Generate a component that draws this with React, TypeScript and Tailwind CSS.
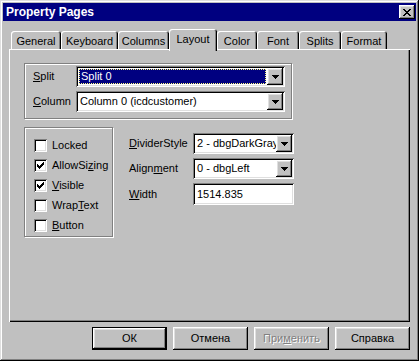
import React from 'react';

const RAISED =
  'shadow-[inset_-1px_-1px_0_#000,inset_1px_1px_0_#fff,inset_-2px_-2px_0_#808080,inset_2px_2px_0_#dfdfdf]';
const SUNKEN =
  'shadow-[inset_1px_1px_0_#808080,inset_-1px_-1px_0_#fff,inset_2px_2px_0_#000,inset_-2px_-2px_0_#dfdfdf]';
const GROUP = 'border border-[#808080] shadow-[inset_1px_1px_0_#fff,1px_1px_0_#fff]';

const tabs = [
  { label: 'General', w: 'w-[50px]' },
  { label: 'Keyboard', w: 'w-[57px]' },
  { label: 'Columns', w: 'w-[51px]' },
  { label: 'Layout', w: 'w-[48px]', active: true },
  { label: 'Color', w: 'w-[40px]' },
  { label: 'Font', w: 'w-[42px]' },
  { label: 'Splits', w: 'w-[42px]' },
  { label: 'Format', w: 'w-[46px]' },
];

// 7x4 drop-down arrow, drawn pixel by pixel
function Arrow() {
  return (
    <svg width="7" height="4" viewBox="0 0 7 4" shapeRendering="crispEdges">
      <rect x="0" y="0" width="7" height="1" fill="#000" />
      <rect x="1" y="1" width="5" height="1" fill="#000" />
      <rect x="2" y="2" width="3" height="1" fill="#000" />
      <rect x="3" y="3" width="1" height="1" fill="#000" />
    </svg>
  );
}

function CloseGlyph() {
  const rows = ['XX....XX', '.XX..XX.', '..XXXX..', '...XX...', '..XXXX..', '.XX..XX.', 'XX....XX'];
  return (
    <svg width="8" height="7" viewBox="0 0 8 7" shapeRendering="crispEdges">
      {rows.map((r, y) =>
        r.split('').map((c, x) => (c === 'X' ? <rect key={`${x}-${y}`} x={x} y={y} width="1" height="1" fill="#000" /> : null))
      )}
    </svg>
  );
}

function Check() {
  const rows = ['......X', '.....XX', 'X...XXX', 'XX.XXX.', 'XXXXX..', '.XXX...', '..X....'];
  return (
    <svg width="7" height="7" viewBox="0 0 7 7" shapeRendering="crispEdges">
      {rows.map((r, y) =>
        r.split('').map((c, x) => (c === 'X' ? <rect key={`${x}-${y}`} x={x} y={y} width="1" height="1" fill="#000" /> : null))
      )}
    </svg>
  );
}

function Combo({ value, w, selected }: { value: string; w: string; selected?: boolean }) {
  return (
    <div className={`flex h-[21px] bg-white p-[2px] ${SUNKEN} ${w}`}>
      <div className="flex min-w-0 flex-1 items-center overflow-hidden p-[1px]">
        {selected ? (
          <div className="flex h-full w-full items-center border border-dotted border-[#ffff80] bg-[#000080] pl-[1px] text-white whitespace-nowrap">
            {value}
          </div>
        ) : (
          <span className="pl-[1px] whitespace-nowrap">{value}</span>
        )}
      </div>
      <div className={`flex h-[17px] w-[16px] shrink-0 items-center justify-center bg-[#c0c0c0] ${RAISED}`}>
        <Arrow />
      </div>
    </div>
  );
}

function CheckRow({ checked, children }: { checked?: boolean; children: React.ReactNode }) {
  return (
    <div className="flex h-[13px] items-center gap-[5px]">
      <div className={`flex h-[13px] w-[13px] items-center justify-center bg-white ${SUNKEN}`}>
        {checked && <Check />}
      </div>
      <span className="whitespace-nowrap">{children}</span>
    </div>
  );
}

function Button({ children, isDefault, disabled }: { children: React.ReactNode; isDefault?: boolean; disabled?: boolean }) {
  return (
    <div
      className={`flex h-[23px] w-[75px] items-center justify-center bg-[#c0c0c0] ${RAISED} ${
        isDefault ? 'border border-black' : ''
      } ${disabled ? 'text-[#808080] [text-shadow:1px_1px_0_#fff]' : ''}`}
    >
      {children}
    </div>
  );
}

export default function App() {
  return (
    <div className="flex h-[361px] w-[419px] flex-col bg-[#c0c0c0] p-[3px] font-['Liberation_Sans',Arial,sans-serif] text-[11px] text-black shadow-[inset_-1px_-1px_0_#000,inset_1px_1px_0_#dfdfdf,inset_-2px_-2px_0_#808080,inset_2px_2px_0_#fff]">
      {/* title bar */}
      <div className="flex h-[18px] items-center justify-between bg-[#000080] pl-[3px] pr-[1px]">
        <span className="text-[12px] font-bold text-white">Property Pages</span>
        <div className={`flex h-[14px] w-[16px] items-center justify-center bg-[#c0c0c0] ${RAISED}`}>
          <CloseGlyph />
        </div>
      </div>

      <div className="flex flex-col px-[6px] pt-[8px]">
        {/* tabs */}
        <div className="flex items-end pl-[2px]">
          {tabs.map((t) => (
            <div
              key={t.label}
              className={`flex items-center justify-center rounded-t-[3px] bg-[#c0c0c0] shadow-[inset_1px_1px_0_#fff,inset_-1px_0_0_#000,inset_-2px_0_0_#808080] ${t.w} ${
                t.active ? 'relative z-10 -mb-[2px] h-[22px] pb-[2px]' : 'h-[18px] pt-[2px]'
              }`}
            >
              {t.label}
            </div>
          ))}
        </div>

        {/* tab panel */}
        <div className="flex h-[273px] w-[401px] flex-col pl-[15px] pt-[14px] shadow-[inset_1px_1px_0_#fff,inset_-1px_-1px_0_#000,inset_-2px_-2px_0_#808080]">
          <div className={`flex h-[56px] w-[268px] flex-col gap-[4px] pl-[8px] pt-[2px] ${GROUP}`}>
            <div className="flex h-[21px] items-center">
              <span className="w-[43px]">
                <u>S</u>plit
              </span>
              <Combo value="Split 0" w="w-[209px]" selected />
            </div>
            <div className="flex h-[21px] items-center">
              <span className="w-[43px]">
                <u>C</u>olumn
              </span>
              <Combo value="Column 0 (icdcustomer)" w="w-[209px]" />
            </div>
          </div>

          <div className="mt-[8px] flex">
            <div className={`flex h-[110px] w-[89px] flex-col gap-[7px] pl-[9px] pt-[11px] ${GROUP}`}>
              <CheckRow>Locked</CheckRow>
              <CheckRow checked>
                AllowSi<u>z</u>ing
              </CheckRow>
              <CheckRow checked>
                <u>V</u>isible
              </CheckRow>
              <CheckRow>
                Wrap<u>T</u>ext
              </CheckRow>
              <CheckRow>
                <u>B</u>utton
              </CheckRow>
            </div>

            <div className="ml-[16px] mt-[6px] grid grid-cols-[64px_101px] grid-rows-[21px_21px_22px] gap-y-[4px]">
              <span className="self-center">
                <u>D</u>ividerStyle
              </span>
              <Combo value="2 - dbgDarkGray" w="w-[101px]" />
              <span className="self-center">
                Align<u>m</u>ent
              </span>
              <Combo value="0 - dbgLeft" w="w-[101px]" />
              <span className="self-center">
                <u>W</u>idth
              </span>
              <div className={`h-[22px] bg-white pl-[4px] pt-[3px] ${SUNKEN}`}>1514.835</div>
            </div>
          </div>
        </div>

        {/* dialog buttons */}
        <div className="mt-[5px] flex justify-end gap-[6px]">
          <Button isDefault>ОК</Button>
          <Button>Отмена</Button>
          <Button disabled>
            При<u>м</u>енить
          </Button>
          <Button>Справка</Button>
        </div>
      </div>
    </div>
  );
}
